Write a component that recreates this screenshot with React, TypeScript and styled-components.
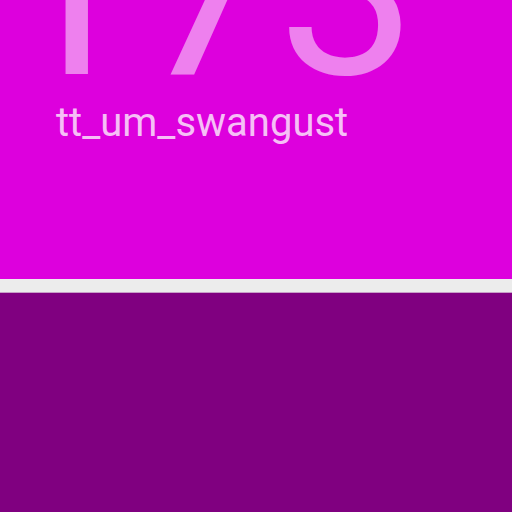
import React from "react";
import styled, { createGlobalStyle } from "styled-components";

const Global = createGlobalStyle`
  html, body { margin: 0; padding: 0; background: #ececec; }
  body { font-family: Roboto, "Noto Sans", sans-serif; overflow: hidden; }
`;

const Page = styled.div`
  width: 512px;
  height: 512px;
  display: flex;
  flex-direction: column;
  gap: 13px;
  background: #ececec;
  overflow: hidden;
`;

const Card = styled.section<{ $bg: string; $h: number }>`
  background: ${(p) => p.$bg};
  height: ${(p) => p.$h}px;
  flex-shrink: 0;
  overflow: hidden;
  display: flex;
  flex-direction: column;
  box-sizing: border-box;
`;

const BigNumber = styled.div`
  font-size: 247px;
  line-height: 200px;
  height: 200px;
  color: rgba(255, 255, 255, 0.5);
  margin-top: -110px;
  white-space: nowrap;
`;

const Label = styled.div`
  font-size: 40px;
  line-height: 1;
  color: rgba(255, 255, 255, 0.75);
  margin-top: 13px;
  padding-left: 56px;
`;

const Lower = styled(Card)`
  border-top: 1px solid #c8a0c8;
  flex: 1;
`;

export default function App() {
  return (
    <>
      <Global />
      <Page>
        <Card $bg="#dd00dd" $h={279}>
          <BigNumber>173</BigNumber>
          <Label>tt_um_swangust</Label>
        </Card>
        <Lower $bg="#800080" $h={220} />
      </Page>
    </>
  );
}
